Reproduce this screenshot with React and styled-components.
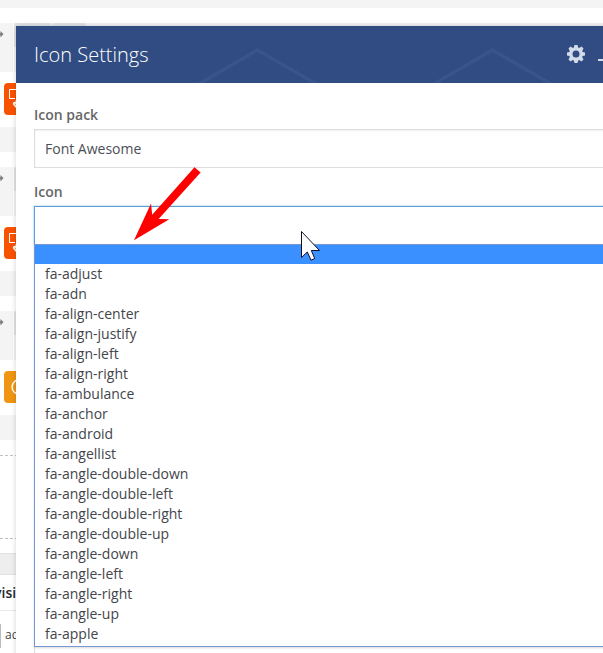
import React from 'react'
import styled, { createGlobalStyle } from "styled-components";

const icons = [
  "fa-adjust",
  "fa-adn",
  "fa-align-center",
  "fa-align-justify",
  "fa-align-left",
  "fa-align-right",
  "fa-ambulance",
  "fa-anchor",
  "fa-android",
  "fa-angellist",
  "fa-angle-double-down",
  "fa-angle-double-left",
  "fa-angle-double-right",
  "fa-angle-double-up",
  "fa-angle-down",
  "fa-angle-left",
  "fa-angle-right",
  "fa-angle-up",
  "fa-apple",
];

function Block({ color, clock }) {
  return (
    <>
      <RowHead>
        <Handle>
          <svg width="4" height="8" viewBox="0 0 4 8">
            <path d="M0 3h.5V1L3.500 4 .5 7.500V5.500H0z" fill="#808080" />
          </svg>
        </Handle>
        <Tab $w={37} />
        <Tab $w={34} />
      </RowHead>
      <Element>
        <Tile $color={color}>
          {clock ? (
            <svg width="32" height="32" viewBox="0 0 32 32" fill="none" stroke="#fff" strokeWidth="1.5">
              <circle cx="15.500" cy="16" r="7.400" />
              <path d="M15.500 11v5h4" />
            </svg>
          ) : (
            <svg width="32" height="32" viewBox="0 0 32 32" fill="none" stroke="#fff">
              <path d="M11 15.500H5.500v-9H26v9h-5" />
              <path d="M12.500 24.500l-2.500-3c-1.200-1.700.5-2.500 1.500-1.200l.8.900v-4" strokeWidth="1.500" />
            </svg>
          )}
        </Tile>
      </Element>
      <RowFoot />
    </>
  )
}

function App() {
  return (
    <Page>
      <GlobalStyle />
      <Background>
        <TopStrip />
        <Block color="#f95302" />
        <Block color="#f95302" />
        <Block color="#f09512" clock />
        <DropZone />
        <Divider />
        <MetaTitle>visi</MetaTitle>
        <MetaRow>
          <Thumb />
          <span>admin</span>
        </MetaRow>
      </Background>

      <Modal>
        <Header>
          <Pattern width="587" height="57" viewBox="0 0 587 57">
            <path d="M182 58.500L241.500 24L301 58.500M417 58.500L476.500 24L536 58.500" />
          </Pattern>
          <h3>Icon Settings</h3>
          <Actions>
            <svg width="18" height="18" viewBox="0 0 18 18">
              <path
                fill="#d3daea"
                fillRule="evenodd"
                d="M7.500 0h3l.7 2.500 1 .4 2.300-1.300 2 2-1.300 2.300.4 1 2.400.6v3l-2.400.6-.4 1 1.300 2.300-2 2-2.300-1.300-1 .4-.7 2.500h-3l-.7-2.500-1-.4-2.300 1.300-2-2 1.300-2.300-.4-1L0 10.500v-3l2.400-.6.4-1-1.300-2.300 2-2 2.300 1.300 1-.4zM9 5.500a3.500 3.500 0 1 0 0 7a3.500 3.500 0 1 0 0-7z"
              />
            </svg>
            <Minimize />
          </Actions>
        </Header>
        <Form>
          <Label>Icon pack</Label>
          <Select>Font Awesome</Select>
          <Label>Icon</Label>
          <Select $open>
            <Dropdown>
              <Option $active />
              {icons.map((name) => (
                <Option key={name}>{name}</Option>
              ))}
            </Dropdown>
          </Select>
          <NextField />
        </Form>
      </Modal>

      <Arrow width="72" height="76" viewBox="0 0 72 76">
        <path d="M64.500 2.300L70.600 7.500L28.600 54L39.300 54.300L4 75.200L21 38.500L22.200 49.800Z" fill="#fe0000" />
      </Arrow>
      <Cursor width="20" height="32" viewBox="0 0 20 32">
        <path d="M1.500 1.500V27.500L7.300 22L11 30.200L14.700 28.500L11.300 20.500H19.500Z" fill="#fff" stroke="#10102a" />
      </Cursor>
    </Page>
  )
}

export default App

const GlobalStyle = createGlobalStyle`
  * {
    box-sizing: border-box;
  }
  body {
    margin: 0;
    overflow: hidden;
    background: #fff;
    font-family: "Open Sans", "Noto Sans", sans-serif;
  }
`;

const Page = styled.div`
  position: relative;
  width: 603px;
  height: 653px;
  overflow: hidden;
`;

const Background = styled.div`
  display: flex;
  flex-direction: column;
`;

const TopStrip = styled.div`
  height: 8px;
  margin-bottom: 15px;
  background: #f4f4f4;
`;

const RowHead = styled.div`
  display: flex;
  gap: 1px;
  height: 49px;
  background: linear-gradient(to right, #f4f4f4 13px, #fff 13px, #fff 14px, #f4f4f4 14px);
`;

const Handle = styled.div`
  width: 13px;
  padding-top: 7px;
  svg {
    display: block;
  }
`;

const Tab = styled.div`
  width: ${(p) => p.$w}px;
  height: 24px;
  border-radius: 2px 2px 0 0;
  background: #e2e3e4;
`;

const Element = styled.div`
  height: 55px;
  padding: 11px 4px;
`;

const Tile = styled.div`
  width: 32px;
  height: 32px;
  border-radius: 4px;
  background: ${(p) => p.$color};
  svg {
    display: block;
  }
`;

const RowFoot = styled.div`
  height: 25px;
  margin-bottom: 15px;
  background: #f4f4f4;
`;

const DropZone = styled.div`
  height: 84px;
  border: 1px dashed #c2c2c2;
  border-width: 1px 0;
`;

const Divider = styled.div`
  height: 22px;
  margin-top: 14px;
  background: #eee;
  border: 1px solid #e2e2e2;
  border-width: 1px 0;
`;

const MetaTitle = styled.div`
  height: 36px;
  margin-left: -6px;
  border-bottom: 1px solid #e8e8e8;
  font-size: 14px;
  font-weight: 600;
  line-height: 36px;
  color: #23282d;
`;

const MetaRow = styled.div`
  display: flex;
  gap: 4px;
  padding-top: 13px;
  font-size: 12px;
  line-height: 22px;
  color: #444;
`;

const Thumb = styled.div`
  width: 1px;
  height: 24px;
  background: #bbb;
`;

const Modal = styled.div`
  position: absolute;
  top: 26px;
  left: 16px;
  width: 640px;
  height: 680px;
  background: #fff;
  box-shadow: 0 0 5px rgba(0, 0, 0, 0.18);
`;

const Header = styled.div`
  position: relative;
  display: flex;
  align-items: center;
  height: 57px;
  padding-left: 18px;
  background: #304c82;
  h3 {
    flex: 0 0 533px;
    margin: 0;
    font-size: 20px;
    font-weight: 300;
    line-height: 28px;
    color: #fff;
  }
`;

const Pattern = styled.svg`
  position: absolute;
  top: 0;
  left: 0;
  fill: none;
  stroke: #37558c;
  stroke-width: 3.5;
`;

const Actions = styled.div`
  display: flex;
  align-items: center;
  gap: 13px;
  margin-top: -2px;
`;

const Minimize = styled.div`
  width: 16px;
  height: 2px;
  margin-top: 13px;
  background: #d3daea;
`;

const Form = styled.div`
  padding: 22px 18px;
`;

const Label = styled.div`
  height: 24px;
  font-size: 14px;
  font-weight: 600;
  line-height: 20px;
  color: #666;
`;

const Select = styled.div`
  position: relative;
  height: 39px;
  margin-bottom: 14px;
  padding-left: 10px;
  border: 1px solid ${(p) => (p.$open ? "#5b9dd9" : "#ddd")};
  box-shadow: ${(p) => (p.$open ? "0 0 2px rgba(30, 140, 190, 0.5)" : "inset 0 1px 2px rgba(0, 0, 0, 0.07)")};
  font-size: 14px;
  line-height: 37px;
  color: #4c4f56;
`;

const Dropdown = styled.div`
  position: absolute;
  top: 37px;
  left: -1px;
  right: -1px;
  height: 403px;
  border: 1px solid #7799d3;
  background: #fff;
  box-shadow: 0 1px 2px rgba(0, 0, 0, 0.15);
`;

const Option = styled.div`
  height: ${(p) => (p.$active ? 19 : 20)}px;
  padding-left: 10px;
  background: ${(p) => (p.$active ? "#3a90ff" : "transparent")};
  line-height: 19px;
  color: #43454b;
`;

const NextField = styled.div`
  height: 60px;
  margin-top: 368px;
  border: 1px solid #ddd;
`;

const Arrow = styled.svg`
  position: absolute;
  top: 165px;
  left: 130px;
`;

const Cursor = styled.svg`
  position: absolute;
  top: 230px;
  left: 300px;
`;
